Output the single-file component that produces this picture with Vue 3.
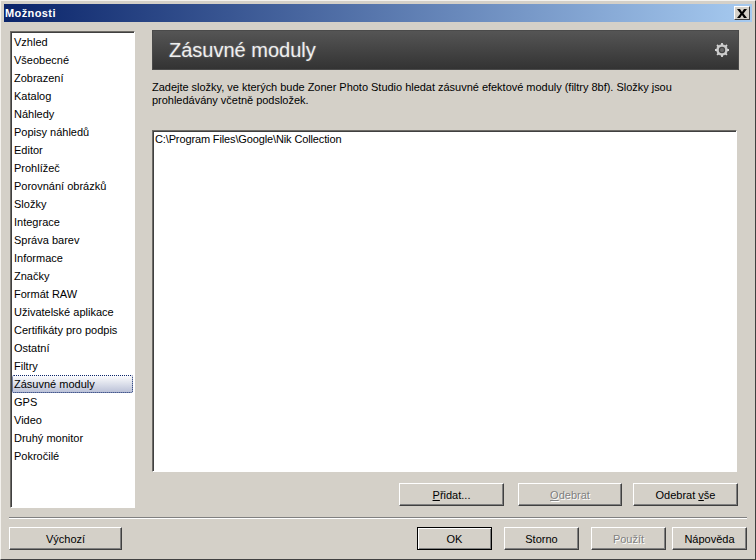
<script setup>
const items = ['Vzhled','Všeobecné','Zobrazení','Katalog','Náhledy','Popisy náhledů','Editor','Prohlížeč','Porovnání obrázků','Složky','Integrace','Správa barev','Informace','Značky','Formát RAW','Uživatelské aplikace','Certifikáty pro podpis','Ostatní','Filtry','Zásuvné moduly','GPS','Video','Druhý monitor','Pokročilé']
const active = 'Zásuvné moduly'
</script>

<template>
  <div class="win">
    <div class="title">
      <span class="title-text">Možnosti</span>
      <button class="close" aria-label="Zavřít">
        <svg width="10" height="9" viewBox="0 0 10 9"><path d="M0 0h3l2 3 2-3h3L6.500 4.500 10 9H7L5 6 3 9H0l3.500-4.500z" fill="#000"/></svg>
      </button>
    </div>
    <div class="body">
      <div class="main">
        <ul class="nav">
          <li v-for="it in items" :key="it" :class="{ sel: it === active }">{{ it }}</li>
        </ul>
        <div class="panel">
          <div class="head">
            <h1>Zásuvné moduly</h1>
            <svg class="gear" width="14" height="14" viewBox="0 0 14 14">
              <circle cx="7" cy="7" r="4.500" fill="none" stroke="#c9c9c9" stroke-width="2.600"/>
              <path d="M7 0v14M0 7h14M2 2l10 10M12 2L2 12" stroke="#d4d4d4" stroke-width="1.800" stroke-dasharray="2.200 9.600 2.200"/>
              <circle cx="7" cy="7" r="2" fill="#6a6a6a"/>
            </svg>
          </div>
          <p class="desc">Zadejte složky, ve kterých bude Zoner Photo Studio hledat zásuvné efektové moduly (filtry 8bf). Složky jsou prohledávány včetně podsložek.</p>
          <div class="box">C:\Program Files\Google\Nik Collection</div>
          <div class="row-actions">
            <button class="btn w105"><u>P</u>řidat...</button>
            <button class="btn w104 dis" disabled><u>O</u>debrat</button>
            <button class="btn w105">Odebrat <u>v</u>še</button>
          </div>
        </div>
      </div>
      <div class="sep"></div>
      <div class="foot">
        <button class="btn wide">Výchozí</button>
        <div class="foot-right">
          <button class="btn w75 def">OK</button>
          <button class="btn w75 storno">Storno</button>
          <button class="btn w75 dis pouzit" disabled>Použít</button>
          <button class="btn w75">Nápověda</button>
        </div>
      </div>
    </div>
  </div>
</template>

<style>
html, body { margin: 0; background: #d4d0c8; }
</style>

<style scoped>
.win {
  width: 756px; height: 560px; box-sizing: border-box;
  background: #d4d0c8; padding: 3px;
  border: 1px solid; border-color: #f4f2ee #404040 #404040 #f4f2ee;
  font: 11px "Liberation Sans", Arial, sans-serif; color: #000;
  display: flex; flex-direction: column;
}
.title {
  height: 18px; flex: none; display: flex; align-items: center; justify-content: space-between;
  background: linear-gradient(90deg, #0a246a, #a6caf0);
  padding: 0 2px 0 1px;
}
.title-text { color: #fff; font-weight: bold; font-size: 11px; letter-spacing: 0.4px; }
.close {
  width: 16px; height: 14px; padding: 0; display: flex; align-items: center; justify-content: center;
  background: #d4d0c8; border: 1px solid; border-color: #fff #404040 #404040 #fff;
}
.body { flex: 1; display: flex; flex-direction: column; padding: 9px 5px 7px 5px; min-height: 0; }
.main { display: flex; gap: 17px; height: 477px; flex: none; padding-left: 1px; }
.nav {
  width: 125px; box-sizing: border-box; margin: 0; padding: 1px 0 0 0; list-style: none; background: #fff; flex: none;
  border: 1px solid; border-color: #6e6c67 #fff #fff #6e6c67;
  box-shadow: inset 1px 1px 0 #404040;
}
.nav li { height: 18px; line-height: 18px; padding-left: 2px; margin: 0 1px 0 1px; box-sizing: border-box; white-space: nowrap; }
.nav .sel {
  background: linear-gradient(#ffffff, #cdd2e2 70%, #b8bfd6);
  outline: 1px dotted #0a246a; outline-offset: -1px; border-radius: 2px;
}
.panel { flex: 1; display: flex; flex-direction: column; min-width: 0; }
.head {
  height: 40px; flex: none; box-sizing: border-box; width: 587px; margin-top: -1px;
  display: flex; align-items: center; justify-content: space-between; padding: 0 9px 0 16px;
  background: linear-gradient(#555, #333);
  border: 1px solid #4a4a4a;
}
.head h1 { margin: 0; color: #eee; font: 20px "Liberation Sans", Arial, sans-serif; font-weight: normal; text-shadow: 0 0 2px rgba(255,255,255,0.35); }
.desc { margin: 11px 0 0 0; line-height: 13px; height: 26px; width: 560px; flex: none; letter-spacing: -0.02px; }
.box {
  margin-top: 23px; width: 585px; height: 342px; flex: none; box-sizing: border-box; background: #fff; padding: 1px 2px;
  line-height: 15px; letter-spacing: -0.13px; border: 1px solid; border-color: #6e6c67 #fff #fff #6e6c67; box-shadow: inset 1px 1px 0 #404040;
}
.row-actions { display: flex; margin-top: 11px; padding-left: 247px; }
.row-actions .btn:nth-child(2) { margin-left: 14px; }
.row-actions .btn:nth-child(3) { margin-left: 11px; }
.btn {
  height: 23px; padding: 0; font: inherit; color: #000; background: #d4d0c8; box-sizing: border-box; flex: none;
  border: 1px solid; border-color: #fff #404040 #404040 #fff;
  box-shadow: inset -1px -1px 0 #808080;
}
.w105 { width: 105px; }
.w104 { width: 104px; }
.wide { width: 113px; }
.w75 { width: 75px; }
.dis { color: #808080; text-shadow: 1px 1px 0 #fff; }
.def { border: 1px solid #000; box-shadow: inset 1px 1px 0 #fff, inset -1px -1px 0 #808080; }
.storno { margin-left: 12px; }
.pouzit { margin-left: 12px; margin-right: 6px; }
.sep { height: 2px; flex: none; margin-top: 9px; background: linear-gradient(#808080 50%, #fff 50%); }
.foot { display: flex; justify-content: space-between; margin-top: 8px; }
.foot-right { display: flex; }
</style>
